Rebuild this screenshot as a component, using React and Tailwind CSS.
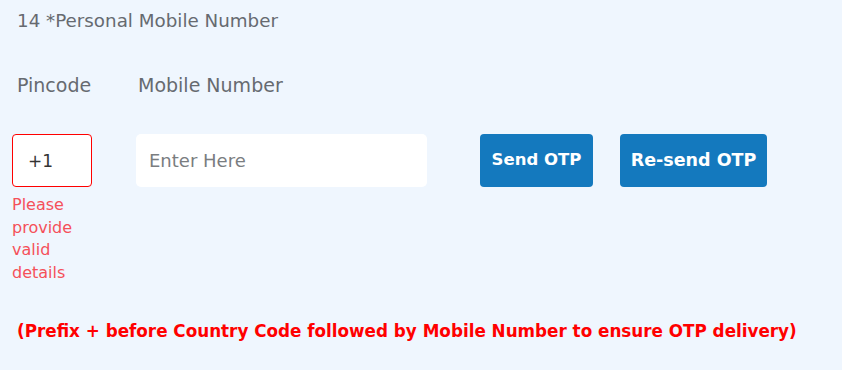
import React, { useState } from 'react';

export default function App() {
  const [pincode, setPincode] = useState('+1');
  const [mobile, setMobile] = useState('');

  return (
    <div className="min-h-[370px] w-full bg-[#eff6fe] px-3 pt-[9px] font-['DejaVu_Sans',sans-serif]">
      {/* Question title */}
      <div className="pl-[5px] text-[18.3px] leading-6 text-[#666a70] whitespace-nowrap">14 *Personal Mobile Number</div>

      <div className="mt-[40px] flex items-start">
        {/* Pincode column */}
        <div className="flex w-[80px] flex-col">
          <label className="pl-[5px] text-[19px] leading-6 text-[#666a70] whitespace-nowrap">Pincode</label>
          <input
            value={pincode}
            onChange={(e) => setPincode(e.target.value)}
            className="mt-[37px] h-[53px] w-[80px] rounded-[4px] border border-[#ff0000] bg-white pl-[15px] text-[17px] text-[#333] outline-none"
          />
          <p className="mt-[7px] text-[16px] leading-[22.5px] text-[#f5505a]">
            Please provide valid details
          </p>
        </div>

        {/* Mobile column */}
        <div className="ml-[44px] flex w-[291px] flex-col">
          <label className="pl-[2px] text-[19px] leading-6 text-[#666a70] whitespace-nowrap">Mobile Number</label>
          <input
            value={mobile}
            onChange={(e) => setMobile(e.target.value)}
            placeholder="Enter Here"
            className="mt-[37px] h-[53px] w-[291px] rounded-[5px] bg-white pl-[13px] text-[18px] text-[#333] placeholder:text-[#7a7d80] outline-none"
          />
        </div>

        {/* Buttons */}
        <div className="mt-[61px] ml-[53px] flex gap-[27px]">
          <button className="h-[53px] w-[113px] rounded-[4px] bg-[#1479be] text-[16.5px] font-semibold text-white">
            Send OTP
          </button>
          <button className="h-[53px] w-[147px] rounded-[4px] bg-[#1479be] text-[17.5px] font-semibold text-white">
            Re-send OTP
          </button>
        </div>
      </div>

      <p className="mt-[33px] pl-[5px] text-[16.8px] font-bold leading-7 text-[#ff0000] whitespace-nowrap">
        (Prefix + before Country Code followed by Mobile Number to ensure OTP delivery)
      </p>
    </div>
  );
}
